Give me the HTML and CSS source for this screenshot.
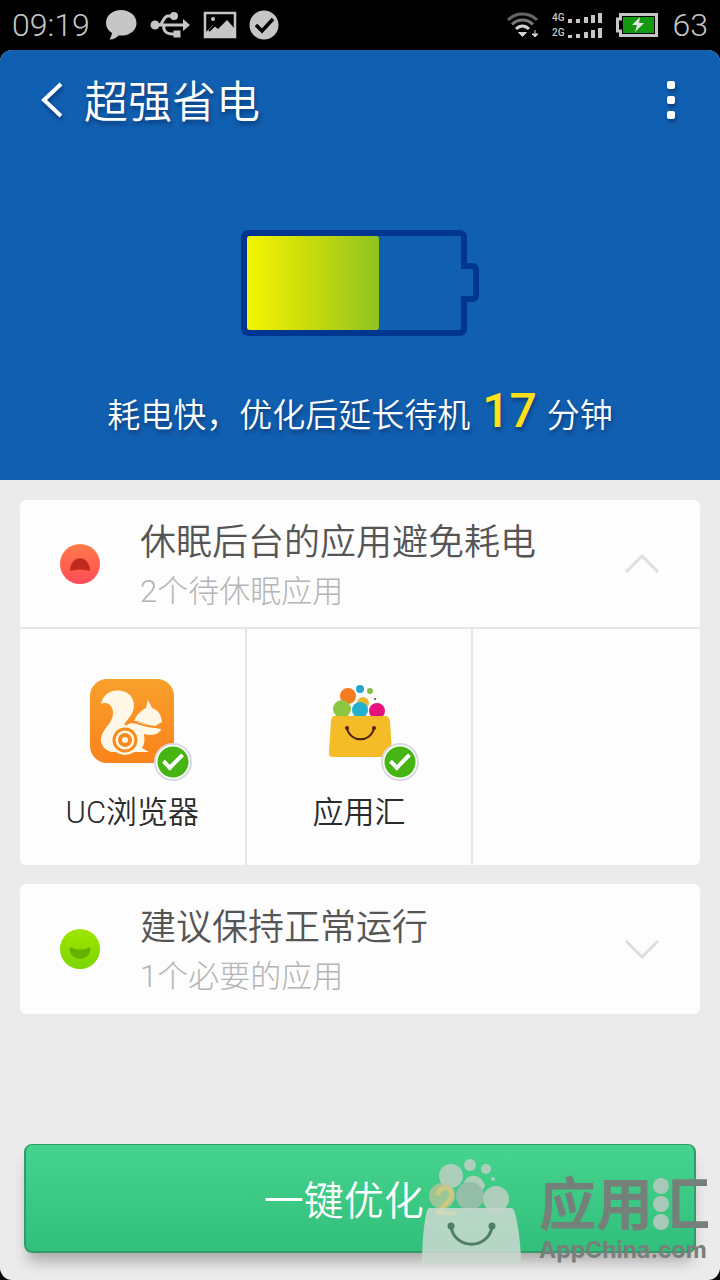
FILE: index.html
```html
<!DOCTYPE html>
<html lang="zh-CN">
<head>
<meta charset="utf-8">
<meta name="viewport" content="width=device-width, initial-scale=1">
<title>超强省电</title>
<link rel="stylesheet" href="styles.css">
</head>
<body>
<div class="screen">
  <div class="status">
    <div class="status-group">
      <span class="clock">09:19</span>
      <svg class="s-chat" width="32" height="32" viewBox="0 0 32 32" fill="#c6c6c6"><path d="M16 1C7.500 1 1 6.500 1 14c0 4 2 7.500 6 10-.5 3-1.500 5-2.500 6.500C9 30.500 11.500 28.500 13.500 26.500 24 27.500 31.500 22 31.500 14 31.500 6.500 24.500 1 16 1z"/></svg>
      <svg class="s-usb" width="42" height="26" viewBox="0 0 42 26" fill="none" stroke="#c6c6c6" stroke-width="3"><path d="M5 13h30M9 13c4 0 4-9 9-9h5M16 13c-4 0-3 9 6 9h4"/><circle cx="5" cy="13" r="3" fill="#c6c6c6"/><circle cx="24" cy="4" r="2.500" fill="#c6c6c6"/><path d="M25 20h4v4h-4z" fill="#c6c6c6"/><path d="M33 7l7 6-7 6z" fill="#c6c6c6" stroke="none"/></svg>
      <svg class="s-pic" width="34" height="28" viewBox="0 0 34 28"><path d="M2 2h30v24H2z" fill="none" stroke="#c6c6c6" stroke-width="2.500"/><circle cx="10" cy="8" r="2" fill="#c6c6c6"/><path d="M2 26v-4l8-8 5 4 9-9 8 9v8z" fill="#c6c6c6"/><path d="M6 20l6-6" stroke="#000" stroke-width="2"/></svg>
      <svg class="s-ok" width="30" height="30" viewBox="0 0 30 30"><circle cx="15" cy="15" r="14.500" fill="#c6c6c6"/><path d="M7 15l6 6L24 9" fill="none" stroke="#000" stroke-width="3.500"/></svg>
    </div>
    <div class="status-group">
      <svg class="s-wifi" width="34" height="26" viewBox="0 0 34 26" fill="none" stroke-width="3"><path d="M2 8C10 0 23 0 31 8" stroke="#666"/><path d="M6 12.500c6-6 15-6 21 0" stroke="#777"/><path d="M10 17c4-4 9-4 13 0" stroke="#d0d0d0"/><path d="M12.500 20.500h8l-4 4z" fill="#d0d0d0" stroke="#d0d0d0" stroke-width="1"/><path d="M29 18v4M26 22h6l-3 3z" fill="#d0d0d0" stroke="#d0d0d0" stroke-width="1"/></svg>
      <div class="sims">
        <div class="sim"><span>4G</span><svg width="36" height="10" viewBox="0 0 36 10" fill="#c6c6c6"><path d="M0 6h4v4H0zM8 6h4v4H8zM16 4h4v6h-4zM23 2h4v8h-4zM30 0h4v10h-4z"/></svg></div>
        <div class="sim"><span>2G</span><svg width="36" height="10" viewBox="0 0 36 10" fill="#c6c6c6"><path d="M0 7h4v3H0zM8 6h4v4H8zM16 4h4v6h-4zM23 2h4v8h-4zM30 0h4v10h-4z"/></svg></div>
      </div>
      <svg class="s-batt" width="43" height="24" viewBox="0 0 43 24"><path d="M4.500 1.500h36v21h-36v-4.500h-3V6h3z" fill="#000" stroke="#c6c6c6" stroke-width="3"/><path d="M7 4h31v16H7z" fill="#12990f"/><path d="M24 4l-8 8h5l-2 7 9-9h-5z" fill="#e6e6e6"/></svg>
      <span class="level">63</span>
    </div>
  </div>

  <main class="app">
    <section class="hero">
      <header class="bar">
        <button class="back" type="button">
          <svg width="24" height="38" viewBox="0 0 24 38" fill="none" stroke="#fff" stroke-width="4"><path d="M21 3L4 19l17 16"/></svg>
          <span>超强省电</span>
        </button>
        <button class="more" type="button" aria-label="更多">
          <svg width="10" height="40" viewBox="0 0 10 40" fill="#fff"><rect x="1" y="1" width="8" height="8" rx="2"/><rect x="1" y="16" width="8" height="8" rx="2"/><rect x="1" y="31" width="8" height="8" rx="2"/></svg>
        </button>
      </header>
      <svg class="battery" width="240" height="106" viewBox="0 0 240 106">
        <defs><linearGradient id="charge"><stop offset="0" stop-color="#f5f500"/><stop offset=".45" stop-color="#cadd0c"/><stop offset="1" stop-color="#8fc31f"/></linearGradient></defs>
        <path d="M9 3h210q5 0 5 5v28h8q4 0 4 4v24q0 5-4 5h-8v29q0 5-5 5H9q-5 0-5-5V8q0-5 5-5z" fill="none" stroke="#00368f" stroke-width="6"/>
        <rect x="7" y="6" width="132" height="94" rx="3" fill="url(#charge)"/>
      </svg>
      <p class="message">耗电快，优化后延长待机<strong>17</strong>分钟</p>
    </section>

    <div class="cards">
      <section class="card">
        <button class="card-head open" type="button" aria-expanded="true">
          <svg class="face" width="40" height="40" viewBox="0 0 40 40"><defs><linearGradient id="red" x2="0" y2="1"><stop offset="0" stop-color="#ff7b47"/><stop offset="1" stop-color="#ff4b59"/></linearGradient></defs><circle cx="20" cy="20" r="20" fill="url(#red)"/><path d="M10 27c0-17 20-17 20 0q-10-3-20 0z" fill="#c22a1c"/></svg>
          <span class="card-text"><span class="card-title">休眠后台的应用避免耗电</span><span class="card-sub">2个待休眠应用</span></span>
          <svg class="chevron" width="36" height="22" viewBox="0 0 36 22" fill="none" stroke="#dedede" stroke-width="3"><path d="M2 19L18 3l16 16"/></svg>
        </button>
        <div class="apps">
          <label class="item">
            <span class="icon">
              <svg width="84" height="84" viewBox="0 0 84 84"><defs><linearGradient id="uc" x2="0" y2="1"><stop offset="0" stop-color="#f9a02c"/><stop offset="1" stop-color="#fa831b"/></linearGradient></defs><rect width="84" height="84" rx="17" fill="url(#uc)"/>
              <path d="M11 25C13 14 23 10 32 12c10 2 14 11 11 20-2 7-9 10-9 16 9-7 19-6 26 0l11 2c-2 6-10 7-17 5 1 8 0 11-2 14l7 4H21C10 69 8 60 15 50c7-8 10-15 7-21-2-5-7-6-11-4z" fill="#fff8e8"/>
              <path d="M44 42c3-7 8-11 12-13 1-4 1-5 2-8l4 8c6 2 9 6 10 14l-7 4c-7 0-12-5-21-5z" fill="#fff8e8"/>
              <path d="M37 43c13-1 15 5 28 5l6 0" fill="none" stroke="#f68b20" stroke-width="2"/>
              <circle cx="35" cy="61" r="15" fill="#fff8e8"/><circle cx="35" cy="61" r="11" fill="#fff8e8" stroke="#f98a1e" stroke-width="3"/><circle cx="35" cy="61" r="5" fill="#fff8e8" stroke="#f98a1e" stroke-width="4"/></svg>
              <input class="tick" type="checkbox" checked>
            </span>
            <span>UC浏览器</span>
          </label>
          <label class="item">
            <span class="icon">
              <svg width="84" height="84" viewBox="0 0 84 84"><circle cx="31" cy="17" r="8" fill="#f47b20"/><circle cx="43" cy="10" r="4" fill="#25a5cf"/><circle cx="53" cy="12" r="3" fill="#86bd42"/><circle cx="58" cy="20" r="1" fill="#633"/><circle cx="46" cy="24" r="6" fill="#efb82c"/><circle cx="25" cy="30" r="9" fill="#8dc641"/><circle cx="43" cy="31" r="8" fill="#25b0cf"/><circle cx="60" cy="32" r="8" fill="#e5127e"/><path d="M17 37h52q3 0 4 5l2 31q0 5-5 5H16q-5 0-4-5l2-31q1-5 3-5z" fill="#f4bc27"/><g stroke="#4d2210" stroke-width="2" fill="none"><path d="M30 49c3 15 24 15 27 0"/><circle cx="30" cy="49" r="1" fill="#4d2210"/><circle cx="57" cy="49" r="1" fill="#4d2210"/></g></svg>
              <input class="tick" type="checkbox" checked>
            </span>
            <span>应用汇</span>
          </label>
          <div class="item"></div>
        </div>
      </section>

      <section class="card">
        <button class="card-head" type="button" aria-expanded="false">
          <svg class="face" width="40" height="40" viewBox="0 0 40 40"><defs><linearGradient id="green" x2="0" y2="1"><stop offset="0" stop-color="#a0e500"/><stop offset="1" stop-color="#7bd600"/></linearGradient></defs><circle cx="20" cy="20" r="20" fill="url(#green)"/><path d="M10 18q10 5 20 0c2 6-4 12-10 12S8 24 10 18z" fill="#63b300"/></svg>
          <span class="card-text"><span class="card-title">建议保持正常运行</span><span class="card-sub">1个必要的应用</span></span>
          <svg class="chevron" width="36" height="22" viewBox="0 0 36 22" fill="none" stroke="#dedede" stroke-width="3"><path d="M2 3l16 16L34 3"/></svg>
        </button>
      </section>
    </div>

    <footer class="footer">
      <button class="optimize" type="button">一键优化 <strong>2</strong></button>
    </footer>
    <div class="watermark">
      <svg width="100" height="105" viewBox="0 0 100 105"><g fill="#b9cfc1" opacity=".9"><circle cx="30" cy="18" r="12"/><circle cx="49" cy="7" r="6"/><circle cx="65" cy="11" r="5"/><circle cx="72" cy="21" r="2"/><path d="M43 25c3-10 18-10 21 3l-4 7q-7-8-17-10z"/><circle cx="49" cy="38" r="14" fill="#9ebdad"/><circle cx="75" cy="41" r="13"/></g><circle cx="21" cy="38" r="13" fill="#bcc39d" opacity=".75"/><path d="M8 50h83c4 0 9 34 9 55H1C1 84 4 50 8 50z" fill="#c8d8cf" opacity=".88"/><g fill="none" stroke="#4e7e67" stroke-width="3"><path d="M30 69c4 23 37 23 41 0"/><circle cx="30" cy="68" r="2" fill="#4e7e67"/><circle cx="71" cy="68" r="2" fill="#4e7e67"/></g></svg>
      <div class="brand">
        <div class="brand-name"><span>应用</span><span class="hui"><span class="hui-text">汇</span><svg class="dots" width="16" height="54" viewBox="0 0 16 54" fill="#a9c8b7"><circle cx="8" cy="9" r="8"/><circle cx="8" cy="27" r="8"/><circle cx="8" cy="45" r="8"/></svg></span></div>
        <div class="brand-url">AppChina.com</div>
      </div>
    </div>
  </main>
</div>
</body>
</html>
```

FILE: styles.css
```css
* { box-sizing: border-box; }
body {
  margin: 0;
  background: #000;
  font-family: Roboto, "Noto Sans CJK SC", sans-serif;
  font-weight: 350;
}
button {
  border: 0;
  padding: 0;
  background: none;
  font: inherit;
  color: inherit;
  cursor: pointer;
}
svg { display: block; flex: none; }

.screen { min-height: 100vh; display: flex; flex-direction: column; }

.status {
  height: 50px;
  padding: 0 12px;
  display: flex;
  justify-content: space-between;
  align-items: center;
  color: #c6c6c6;
  font-size: 32px;
  font-weight: 300;
}
.status-group { display: flex; align-items: center; }
.clock { margin-right: 15px; }
.s-usb { margin-left: 13px; }
.s-pic { margin-left: 11px; }
.s-ok { margin-left: 12px; }
.sims { margin-left: 12px; display: grid; gap: 4px; }
.sim { display: flex; align-items: center; gap: 3px; font-size: 10px; line-height: 11px; font-weight: 500; }
.s-batt { margin: 0 14px 0 12px; }
.level { line-height: 40px; }

.app {
  position: relative;
  flex: 1;
  display: flex;
  flex-direction: column;
  background: #ebebeb;
  border-radius: 12px;
  overflow: hidden;
}

.hero {
  background: #115fb0;
  color: #fff;
  height: 430px;
  display: flex;
  flex-direction: column;
  align-items: center;
}
.bar {
  align-self: stretch;
  height: 100px;
  padding: 0 44px 0 40px;
  display: flex;
  justify-content: space-between;
  align-items: center;
}
.back { display: flex; align-items: center; gap: 20px; font-size: 44px; line-height: 60px; text-shadow: 1px 3px 4px #0a3a78; }
.back span { padding-top: 6px; }
.back svg, .more svg { filter: drop-shadow(1px 3px 2px #0a3a78); }
.battery { margin-top: 80px; }
.message { margin: 42px 0 0; font-size: 33px; line-height: 66px; text-shadow: 1px 3px 4px #0a3a78; white-space: nowrap; }
.message strong { margin: 0 10px 0 12px; font-size: 48px; font-weight: 500; color: #ffe01b; }

.cards { padding: 20px; display: grid; gap: 19px; }
.card { background: #fdfdfd; border-radius: 6px; overflow: hidden; }
.card-head {
  width: 100%;
  height: 130px;
  padding: 0 40px;
  display: flex;
  align-items: center;
  gap: 40px;
  text-align: left;
}
.card-head.open { height: 127px; }
.card-text { flex: 1; display: grid; padding-top: 6px; }
.card-title { font-size: 36px; line-height: 50px; color: #555; }
.card-sub { font-size: 31px; line-height: 48px; font-weight: 300; color: #b4b4b4; }
.apps { display: grid; grid-template-columns: repeat(3, 1fr); border-top: 2px solid #e6e6e6; }
.item {
  height: 236px;
  padding-top: 50px;
  display: flex;
  flex-direction: column;
  align-items: center;
  gap: 27px;
  font-size: 31px;
  line-height: 46px;
  color: #2b2b2b;
}
.item:not(:last-child) { border-right: 2px solid #e6e6e6; }
.icon { position: relative; }
.tick {
  position: absolute;
  right: -18px;
  bottom: -18px;
  width: 38px;
  height: 38px;
  margin: 0;
  appearance: none;
  border: 2px solid #d9d9e0;
  border-radius: 50%;
  background: radial-gradient(circle, #46b412 15px, #fff 16px);
}
.tick:checked::after {
  content: "";
  box-sizing: border-box;
  position: absolute;
  left: 7px;
  top: 9px;
  width: 20px;
  height: 11px;
  border: solid #fff;
  border-width: 0 0 4px 4px;
  transform: rotate(-45deg);
}

.footer { margin-top: auto; padding: 0 24px 27px; }
.optimize {
  width: 100%;
  height: 109px;
  border: 2px solid #319b6b;
  border-top-width: 1px;
  border-radius: 8px;
  background: linear-gradient(#45d38e, #31bf7b);
  box-shadow: 0 12px 14px -4px #a9a9a9;
  color: #fff;
  font-size: 40px;
}
.optimize strong { font-weight: 500; color: #ffe01b; }

.watermark {
  position: absolute;
  right: 10px;
  bottom: 17px;
  display: flex;
  align-items: flex-end;
  gap: 18px;
  pointer-events: none;
  color: #76807a;
}
.brand-name { display: flex; font-size: 57px; line-height: 62px; font-weight: 700; }
.hui { position: relative; }
.hui-text { display: block; clip-path: inset(0 0 0 32%); }
.dots { position: absolute; left: 0; top: 2px; }
.brand-url { font-family: Inter, sans-serif; font-size: 23px; line-height: 26px; font-weight: 700; }
```
